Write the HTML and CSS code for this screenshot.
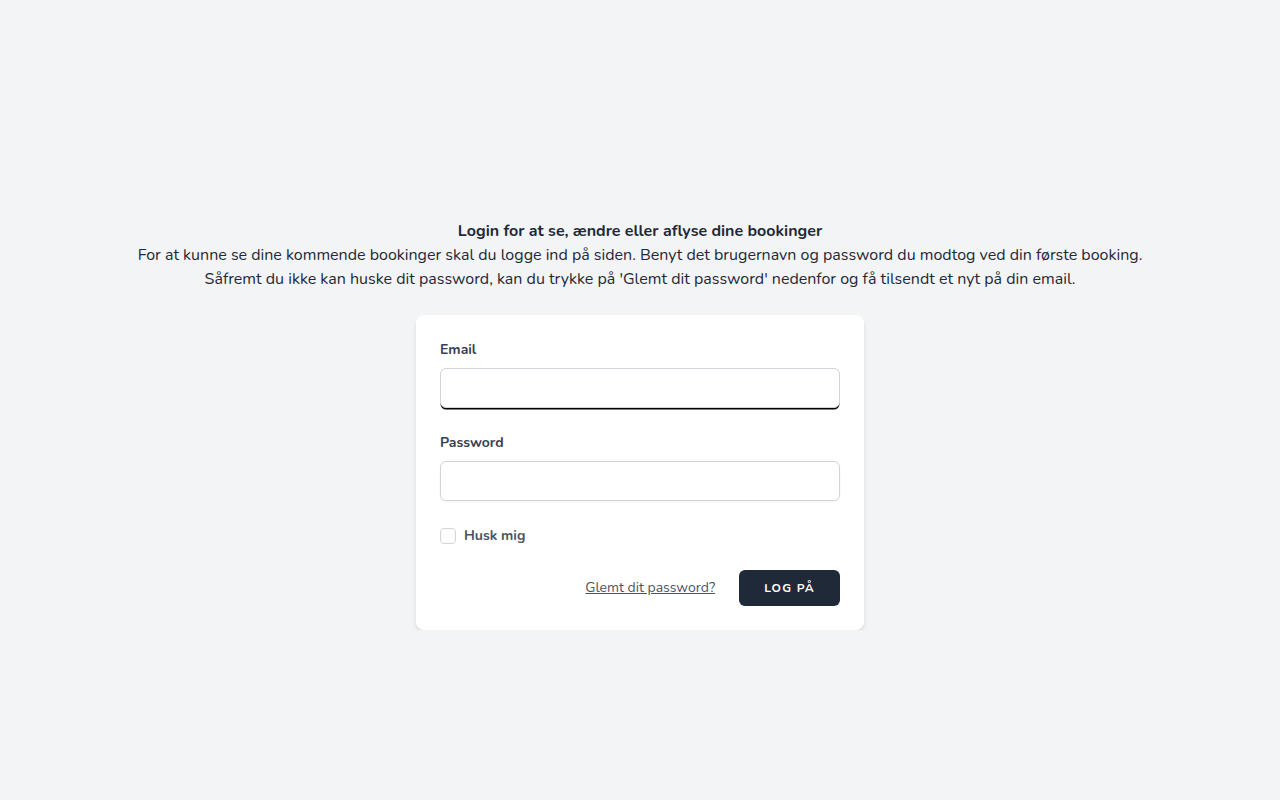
FILE: index.html
```html
<!DOCTYPE html>
<html lang="da">
<head>
    <meta charset="utf-8">
    <title>Login</title>
    <link rel="stylesheet" href="styles.css">
</head>
<body>
<div class="page">
    <div class="intro">
        <p class="intro-title">Login for at se, ændre eller aflyse dine bookinger</p>
        <p>For at kunne se dine kommende bookinger skal du logge ind på siden. Benyt det brugernavn og password du modtog ved din første booking.</p>
        <p>Såfremt du ikke kan huske dit password, kan du trykke på 'Glemt dit password' nedenfor og få tilsendt et nyt på din email.</p>
    </div>

    <div class="card">
        <form>
            <div class="field">
                <label for="email">Email</label>
                <input type="email" id="email" class="input input-focus">
            </div>

            <div class="field spaced">
                <label for="password">Password</label>
                <input type="password" id="password" class="input">
            </div>

            <div class="remember">
                <label class="check-label">
                    <span class="checkbox"></span>
                    <span>Husk mig</span>
                </label>
            </div>

            <div class="actions">
                <a href="#" class="forgot">Glemt dit password?</a>
                <button type="button" class="button">Log på</button>
            </div>
        </form>
    </div>
</div>
</body>
</html>
```

FILE: styles.css
```css
html, body {
    margin: 0;
    padding: 0;
}

body {
    background: #f3f4f6;
    font-family: "Nunito", "Lato", "Noto Sans", sans-serif;
    color: #1f2937;
    font-size: 16px;
    line-height: 24px;
}

.page {
    display: flex;
    flex-direction: column;
    align-items: center;
    padding-top: 219px;
}

.intro {
    text-align: center;
}

.intro p {
    margin: 0;
}

.intro-title {
    font-weight: 700;
}

.card {
    width: 448px;
    box-sizing: border-box;
    margin-top: 24px;
    padding: 24px;
    background: white;
    border-radius: 8px;
    box-shadow: 0 4px 6px -1px rgba(0, 0, 0, 0.1), 0 2px 4px -1px rgba(0, 0, 0, 0.06);
}

.field label {
    display: block;
    font-size: 14px;
    line-height: 20px;
    font-weight: 700;
    color: #374151;
    padding-top: 1px;
}

.input {
    display: block;
    width: 100%;
    height: 40px;
    box-sizing: border-box;
    margin-top: 8px;
    border: 1px solid #d1d5db;
    border-radius: 6px;
    background: white;
    box-shadow: 0 1px 2px rgba(0, 0, 0, 0.05);
    font: inherit;
    outline: none;
}

.input-focus {
    box-shadow: 0 2px 0 -0.5px #000;
}

.spaced {
    margin-top: 24px;
}

.remember {
    height: 20px;
    margin-top: 25px;
}

.check-label {
    display: inline-flex;
    align-items: center;
    font-size: 14px;
    line-height: 20px;
    font-weight: 700;
    color: #4b5563;
}

.checkbox {
    width: 16px;
    height: 16px;
    box-sizing: border-box;
    border: 1px solid #d1d5db;
    border-radius: 4px;
    background: white;
    margin-right: 8px;
}

.actions {
    display: flex;
    justify-content: flex-end;
    align-items: center;
    margin-top: 24px;
}

.forgot {
    font-size: 14px;
    line-height: 20px;
    color: #4b5563;
    text-decoration: underline;
    margin-right: 24px;
}

.button {
    height: 36px;
    padding: 0 25px;
    background: #1f2937;
    color: white;
    border: none;
    border-radius: 6px;
    font-family: inherit;
    font-size: 12px;
    font-weight: 700;
    letter-spacing: 0.1em;
    text-transform: uppercase;
}
```
